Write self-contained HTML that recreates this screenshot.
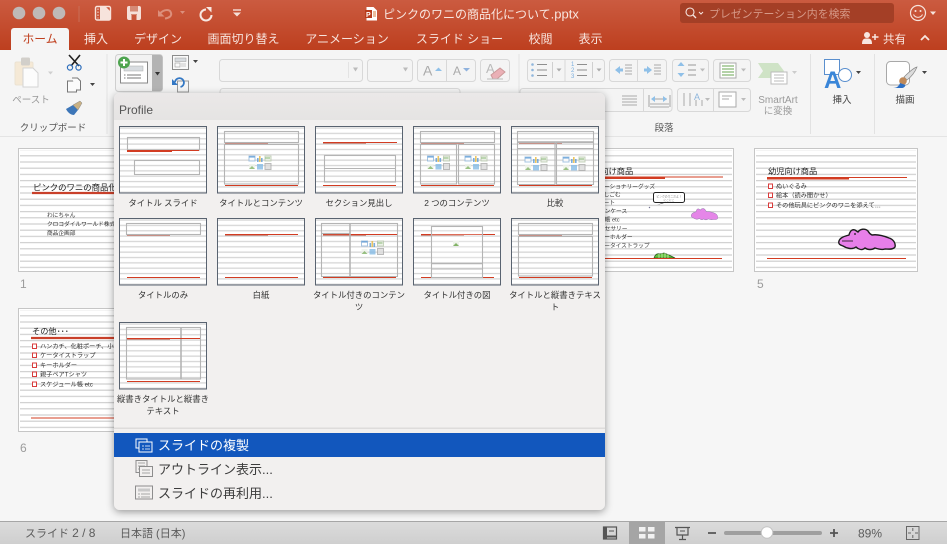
<!DOCTYPE html>
<html lang="ja"><head><meta charset="utf-8"><title>ピンクのワニの商品化について.pptx</title>
<style>
html,body{margin:0;padding:0;background:#f6f6f6;width:947px;height:544px;overflow:hidden}
svg{display:block}
text{font-family:"Liberation Sans","Noto Sans CJK JP",sans-serif}
.tab{font-size:12px;fill:#f7e3dc;text-anchor:middle}
.lb{font-size:8.4px;fill:#333;text-anchor:middle}
.rb{font-size:9.5px;fill:#999;text-anchor:middle}
.rd{font-size:9.5px;fill:#444;text-anchor:middle}
.m{font-size:13px;fill:#3c3c3c}
.st{font-size:11px;fill:#5c5c5c}
.t8{font-size:8.2px;fill:#222}
.t6{font-size:6.2px;fill:#333}
.t5{font-size:5.7px;fill:#333}
.n{font-size:12px;fill:#9c9c9c}
.bx{fill:none;stroke:#b4b4b4;stroke-width:1.1}
.rr{stroke:#d23c22;stroke-width:.9}
.rg{stroke:#c88f85;stroke-width:1}
.ic{fill:none;stroke:#8d8d8d;stroke-width:1}
.btn{fill:#f4f4f4;stroke:#d8d8d8;stroke-width:1}
</style></head><body>
<svg width="947" height="544" viewBox="0 0 947 544" xmlns="http://www.w3.org/2000/svg">
<defs>
<linearGradient id="tb" x1="0" y1="0" x2="0" y2="1"><stop offset="0" stop-color="#cb5b40"/><stop offset="1" stop-color="#bd3f1f"/></linearGradient>
<linearGradient id="sb" x1="0" y1="0" x2="0" y2="1"><stop offset="0" stop-color="#dcdcdc"/><stop offset="1" stop-color="#cfcfcf"/></linearGradient>
<linearGradient id="ph" x1="0" y1="0" x2="0" y2="1"><stop offset="0" stop-color="#ebe8e8"/><stop offset="1" stop-color="#e5e4e3"/></linearGradient>
<pattern id="s1" width="6.2" height="6.2" patternUnits="userSpaceOnUse"><rect width="6.2" height="1.2" y="1" fill="#cfcfcf"/></pattern>
<pattern id="s2" width="10" height="5.35" patternUnits="userSpaceOnUse"><rect width="10" height="1.3" y="1.4" fill="#d6d6d6"/></pattern>
<filter id="sh" x="-5%" y="-5%" width="110%" height="110%"><feDropShadow dx="0" dy="2" stdDeviation="4" flood-color="#000" flood-opacity=".38"/></filter>
<g id="cl" opacity=".8">
<rect x="-11" y="-8" width="6" height="5" fill="#fff" stroke="#8fb6dc"/><rect x="-11" y="-8" width="6" height="1.6" fill="#5c9bd5"/>
<rect x="-3" y="-6" width="1.6" height="4" fill="#5c9bd5"/><rect x="-1" y="-8" width="1.6" height="6" fill="#e8b93a"/><rect x="1" y="-6" width="1.6" height="4" fill="#5c9bd5"/>
<rect x="5" y="-8" width="6" height="5" fill="#e8efe3" stroke="#b9c9ad"/><path d="M5 -6h5" stroke="#70a85a"/>
<rect x="-11" y="0" width="6" height="5" fill="#eef3ea"/><path d="M-11 5l3-3 3 3z" fill="#82b366"/>
<rect x="-3" y="0" width="6" height="5.5" fill="#86bce6"/>
<rect x="5" y="-.5" width="6" height="6" fill="#dcdcdc" stroke="#aaa"/>
</g>
<path id="croc" d="M839 241C840 237 846 236 849 235 850 231 852 229 855 230L858 232C860 229 865 228 868 231 869 233 870 234 872 235 878 234 884 236 889 238 893 239 896 243 895 247 893 250 888 249 885 249 882 250 878 249 875 248 872 250 868 250 865 248 862 251 858 249 856 247 852 250 846 248 843 246 840 245 838 244 839 241Z"/>
<g id="tile"><rect x=".5" y=".5" width="87" height="66.5" fill="#fff"/><rect x="1" y="1" width="86" height="65.5" fill="url(#s2)"/><rect x=".5" y=".5" width="87" height="66.5" fill="none" stroke="#596370" stroke-width="1"/></g>
<g id="slide"><rect x=".5" y=".5" width="163" height="123" fill="#fff" stroke="#c6c6c6"/><rect x="2" y="2" width="160" height="120" fill="url(#s1)"/></g>
</defs>

<!-- base -->
<rect width="947" height="544" fill="#f6f6f6"/>
<rect width="947" height="50" fill="url(#tb)"/>
<rect y="50" width="947" height="86" fill="#f5f5f5"/>
<rect y="136" width="947" height="1" fill="#e4e4e4"/>

<!-- title bar -->
<circle cx="19" cy="13" r="6.3" fill="#bfb9b7"/><circle cx="39" cy="13" r="6.3" fill="#bfb9b7"/><circle cx="59" cy="13" r="6.3" fill="#bfb9b7"/>
<rect x="78.500" y="6" width="1" height="16" fill="#c96e57"/>
<rect x="95.500" y="6.500" width="15" height="13.500" rx="1.500" fill="none" stroke="#f7e3dc" stroke-width="1.400"/><path d="M100 7h6l4 4v9h-10z" fill="#f7e3dc"/><path d="M98 8.500v10" stroke="#f7e3dc" stroke-dasharray="1.500 1.500"/>
<rect x="127" y="6" width="14" height="14" rx="2" fill="#f5dfd8"/><rect x="130" y="6" width="8" height="5.500" fill="#d58a76"/><rect x="131.500" y="15" width="5" height="5" fill="#c9553a"/><rect x="131" y="14" width="6" height="1" fill="#d58a76"/>
<path d="M160 13.500C164 9 170 9 171 13 172 16 169 18 165 18.500" fill="none" stroke="#dc8f7c" stroke-width="2"/><path d="M158 10v6.500h6.500z" fill="#dc8f7c"/><path d="M180 11h5l-2.500 3z" fill="#dc8f7c"/>
<path d="M206 9.500A5.500 5.500 0 1 0 211.500 15" fill="none" stroke="#f7e8e2" stroke-width="2"/><path d="M206 7h5.500v5.500z" fill="#f7e8e2"/>
<path d="M233 10h8" stroke="#f5dfd8" stroke-width="1.400"/><path d="M233 12.500h8l-4 4z" fill="#f5dfd8"/>
<path d="M366.500 7h7l3.500 3.500v10h-10.500z" fill="#fff"/><rect x="365" y="10" width="7" height="8" fill="#b83c1c"/><text x="366" y="17" font-size="7" font-weight="bold" fill="#fff">P</text><path d="M373 12h3M373 14h3M373 16h3" stroke="#d77b3c"/>
<text x="383" y="18.500" font-size="12" fill="#f8e6e0">ピンクのワニの商品化について<tspan font-size="13">.pptx</tspan></text>
<rect x="680" y="3" width="214" height="20" rx="3" fill="#a43f26"/>
<circle cx="690" cy="12" r="4" fill="none" stroke="#f5e5e0" stroke-width="1.100"/><path d="M693 15l3 3" stroke="#f5e5e0" stroke-width="1.300"/><path d="M699 12l2 2 2-2" fill="none" stroke="#f5e5e0"/>
<text x="709" y="17.500" font-size="10.900" fill="#d69887">プレゼンテーション内を検索</text>
<circle cx="918" cy="13" r="7.500" fill="none" stroke="#f7e3dc" stroke-width="1.200"/><circle cx="915.500" cy="11" r="1" fill="#f7e3dc"/><circle cx="920.500" cy="11" r="1" fill="#f7e3dc"/><path d="M913.500 14.500a5 5 0 0 0 9 0" fill="none" stroke="#f7e3dc"/><path d="M930 11.500h6l-3 3.500z" fill="#f7e3dc"/>

<!-- tabs -->
<path d="M11 50V31a3 3 0 0 1 3-3h52a3 3 0 0 1 3 3v19z" fill="#f5f5f5"/>
<text x="40" y="43" text-anchor="middle" font-size="11.800" fill="#c0401f">ホーム</text>
<text class="tab" x="96" y="43">挿入</text>
<text class="tab" x="158" y="43">デザイン</text>
<text class="tab" x="243.500" y="43">画面切り替え</text>
<text class="tab" x="347" y="43">アニメーション</text>
<text class="tab" x="459.500" y="43">スライド ショー</text>
<text class="tab" x="540.500" y="43">校閲</text>
<text class="tab" x="590.500" y="43">表示</text>
<circle cx="867" cy="35" r="3" fill="#f8e6e0"/><path d="M862 44c0-5 2-5.500 5-5.500s5 .5 5 5.500z" fill="#f8e6e0"/><path d="M872 37h6.500M875 34v6" stroke="#f8e6e0" stroke-width="1.500"/>
<text x="883" y="43" font-size="11.500" fill="#f8e6e0">共有</text>
<path d="M921 40l4-4 4 4" fill="none" stroke="#f8e6e0" stroke-width="1.800"/>

<!-- ribbon separators -->
<g fill="#e2e2e2"><rect x="106.500" y="54" width="1" height="80"/><rect x="518.500" y="54" width="1" height="80"/><rect x="810" y="54" width="1" height="80"/><rect x="874" y="54" width="1" height="80"/></g>

<!-- clipboard -->
<rect x="15" y="62" width="18" height="23" rx="1.500" fill="#f5e9d6" stroke="#ebe2d2"/><rect x="21" y="57.500" width="9" height="8" rx="1.500" fill="#d2cfca"/>
<path d="M23 68h10l5 5v14H23z" fill="#fcfcfc" stroke="#d4d4d4"/><path d="M48 71.500h5l-2.500 3z" fill="#cfcfcf"/>
<text class="rb" x="31" y="103">ペースト</text>
<path d="M69 55l10 11M80 55L71 66" stroke="#222" stroke-width="1.600"/><circle cx="70" cy="67.500" r="2.600" fill="none" stroke="#2f6fbc" stroke-width="1.200"/><circle cx="78.500" cy="67.500" r="2.600" fill="none" stroke="#2f6fbc" stroke-width="1.200"/>
<rect x="67.500" y="81" width="9" height="11" fill="#fbfbfb" stroke="#777"/><path d="M72 78h5.500l3 3v9h-4" fill="#fbfbfb" stroke="#777"/><path d="M90 83h5l-2.500 3z" fill="#444"/>
<path d="M66 109l7-4 5 5-4 5c-3 0-6-2-8-6z" fill="#3d76b8"/><path d="M73 105l7-4 2 2-4 7z" fill="#c9b184" stroke="#888" stroke-width=".5"/>
<text x="53" y="131" text-anchor="middle" font-size="9.500" fill="#555">クリップボード</text>

<!-- new slide -->
<rect x="115.500" y="54.500" width="47" height="37" rx="3" fill="#f2f2f2" stroke="#cfcfcf"/>
<path d="M152 55h8a2.500 2.500 0 0 1 2.500 2.500v31a2.500 2.500 0 0 1-2.500 2.500h-8z" fill="#b3b3b3"/><path d="M155 72h5l-2.500 3.500z" fill="#333"/>
<rect x="120.500" y="62" width="27" height="21" fill="#fff" stroke="#888"/><rect x="124" y="66" width="19" height="5" fill="#d8dce0" stroke="#aaa" stroke-width=".5"/><path d="M124 75h1.500M127 75h14M124 78h1.500M127 78h14" stroke="#777"/>
<circle cx="124" cy="62.500" r="6" fill="#4ea44f"/><path d="M120.500 62.500h7M124 59v7" stroke="#fff" stroke-width="2"/>
<rect x="172.500" y="55.500" width="16" height="14" fill="#fafafa" stroke="#8c8c8c"/><rect x="175" y="58" width="11" height="3.500" fill="#d8dce0" stroke="#999" stroke-width=".5"/><rect x="175" y="63" width="5" height="4" fill="none" stroke="#999" stroke-width=".6"/><path d="M181 64h5M181 66h5" stroke="#999" stroke-width=".6"/>
<path d="M193 60h5l-2.500 3z" fill="#444"/>
<rect x="177.500" y="81" width="11" height="11" fill="#f5f5f5" stroke="#999"/><path d="M175 82a4.500 4.500 0 1 1 5.500 5" fill="none" stroke="#3478c4" stroke-width="1.800"/><path d="M172 79v6h6z" fill="#3478c4"/>

<!-- font group -->
<rect class="btn" x="219.500" y="59.500" width="143" height="22" rx="3"/><path d="M353 67.500h5l-2.500 4z" fill="#bbb"/><rect x="348" y="62" width="1" height="16" fill="#e3e3e3"/>
<rect class="btn" x="367.500" y="59.500" width="45" height="22" rx="3"/><path d="M403 67.500h5l-2.500 4z" fill="#bbb"/>
<rect class="btn" x="417.500" y="59.500" width="58" height="22" rx="3"/><rect x="446" y="60" width="1" height="21" fill="#d8d8d8"/>
<text x="423" y="75.500" font-size="14" fill="#aaa">A</text><path d="M435 71l3.500-3.500 3.500 3.500z" fill="#8fc0e8"/>
<text x="453" y="75" font-size="12" fill="#aaa">A</text><path d="M463 68h7l-3.500 3.500z" fill="#8fb2dd"/>
<rect class="btn" x="480.500" y="59.500" width="29" height="22" rx="3"/><text x="486" y="73" font-size="13" fill="#bbb">A</text><path d="M491 75l9-7 5 4-8 7h-4z" fill="#eab0b6" stroke="#c99"/><path d="M487 79h16" stroke="#bbb"/>
<rect class="btn" x="220" y="88.500" width="240" height="20" rx="3"/>

<!-- paragraph row 1 -->
<rect class="btn" x="527.500" y="59.500" width="77" height="22" rx="3"/><rect x="564.500" y="60" width="1" height="21" fill="#d8d8d8"/>
<g fill="#8fb6dc"><circle cx="532.500" cy="64.500" r="1.300"/><circle cx="532.500" cy="70" r="1.300"/><circle cx="532.500" cy="75.500" r="1.300"/></g>
<path d="M537 64.500h10M537 70h10M537 75.500h10M577 64.500h10M577 70h10M577 75.500h10" stroke="#8e8e8e"/><rect x="552" y="62" width="1" height="16" fill="#cfcfcf"/><rect x="592" y="62" width="1" height="16" fill="#cfcfcf"/>
<path d="M556.500 68.500h5l-2.500 3zM596.500 68.500h5l-2.500 3z" fill="#aaa"/>
<text x="571" y="78" font-size="6" fill="#7aaede">3</text><text x="571" y="72" font-size="6" fill="#7aaede">2</text><text x="571" y="66" font-size="6" fill="#7aaede">1</text>
<rect class="btn" x="609.500" y="59.500" width="57" height="22" rx="3"/><rect x="637" y="60" width="1" height="21" fill="#d8d8d8"/>
<path d="M615 70l5-4v2.500h3v3h-3v2.500z" fill="#8fc0e8"/><path d="M625 65h7M625 68h7M625 71h7M625 74h7" stroke="#aaa"/>
<path d="M652 70l-5-4v2.500h-3v3h3v2.500z" fill="#8fc0e8"/><path d="M654 65h7M654 68h7M654 71h7M654 74h7" stroke="#aaa"/>
<rect class="btn" x="672.500" y="59.500" width="36" height="22" rx="3"/><path d="M681 62l-3.500 4h7zM681 77l-3.500-4h7z" fill="#8fc0e8"/><path d="M688 65h8M688 70h8M688 75h8" stroke="#999"/><path d="M700 68.500h5l-2.500 3z" fill="#bbb"/>
<rect class="btn" x="713.500" y="59.500" width="37" height="22" rx="3"/><rect x="720" y="63" width="16" height="15" fill="#fff" stroke="#aaa"/><path d="M722 66h12M722 69h12M722 72h12M722 75h12" stroke="#9cc48c" stroke-width="1.500"/><path d="M741 68.500h5l-2.500 3z" fill="#bbb"/>
<path d="M758 63h20l6 8-6 7h-20l5-7z" fill="#cfe3c6"/><rect x="771" y="72" width="16" height="12" fill="#fff" stroke="#bbb"/><path d="M774 75h10M774 78h10M774 81h10" stroke="#bbb"/><path d="M792 71h5l-2.500 3z" fill="#ccc"/>
<text x="778" y="103" text-anchor="middle" font-size="10" fill="#9a9a9a">SmartArt</text>
<text x="778" y="114" text-anchor="middle" font-size="9.500" fill="#9a9a9a">に変換</text>

<!-- paragraph row 2 -->
<rect class="btn" x="520" y="88.500" width="152" height="23" rx="3"/>
<path d="M622 96h15M622 99h15M622 102h15M622 105h15" stroke="#aaa"/>
<rect x="643" y="89" width="1" height="22" fill="#d8d8d8"/>
<path d="M649 95v12M670 95v12M652 99h15" stroke="#a4a4a4"/><path d="M651 99l4-3v6zM667 99l-4-3v6z" fill="#8fc0e8"/><path d="M650 104h19M650 107h19" stroke="#aaa"/>
<rect class="btn" x="677.500" y="88.500" width="73" height="23" rx="3"/><rect x="713" y="89" width="1" height="22" fill="#d8d8d8"/>
<path d="M684 93v13M690 93v13M696 100v6M702 100v6" stroke="#aaa"/><text x="694" y="100" font-size="9" fill="#8fb6dc">A</text><path d="M705 98h5l-2.500 3z" fill="#bbb"/>
<rect x="719" y="92" width="17" height="15" fill="#fff" stroke="#aaa"/><path d="M722 96h10M722 99h7" stroke="#aaa"/><path d="M741 98h5l-2.500 3z" fill="#bbb"/>
<text x="664" y="131" text-anchor="middle" font-size="9.500" fill="#555">段落</text>

<!-- insert / draw -->
<rect x="824.500" y="59.500" width="15" height="15" fill="#fff" stroke="#5a8fce"/><circle cx="845" cy="75" r="6.500" fill="#fff" stroke="#5a8fce"/>
<text x="824" y="88" font-size="24" font-weight="bold" fill="#3a86d8">A</text>
<path d="M856 71h5l-2.500 3z" fill="#444"/>
<text class="rd" x="842" y="103">挿入</text>
<rect x="886.500" y="61.500" width="23" height="23.500" rx="4" fill="#fff" stroke="#a8a8a8"/>
<path d="M917 67c-4 1-9 6-13 10l3 3c4-3 8-8 10-13z" fill="#dcdcdc" stroke="#888" stroke-width=".7"/><circle cx="903" cy="81" r="3.800" fill="#c08a5a"/><path d="M893 88c4 0 6-2 7-5l5.500 2c-.5 2-2 3-4 3z" fill="#2d6fc4"/>
<path d="M922 71h5l-2.500 3z" fill="#444"/>
<text class="rd" x="905" y="103">描画</text>

<!-- slides -->
<use href="#slide" x="18" y="148"/>
<text x="33" y="190.500" class="t8" style="font-size:8.400px">ピンクのワニの商品化</text>
<path d="M32 193h100" stroke="#c9402a" stroke-width="2.200"/>
<text x="47" y="217" class="t6" style="font-size:5.700px">わにちゃん</text>
<text x="47" y="226" class="t6" style="font-size:5.700px">クロコダイルワールド株式会社</text>
<text x="47" y="235" class="t6" style="font-size:5.700px">商品企画部</text>
<text x="20" y="288" class="n">1</text>

<use href="#slide" x="570" y="148"/>
<text x="584" y="174" class="t8">子供向け商品</text>
<path d="M584 177h139" stroke="#d23c22"/><path d="M584 178h81" stroke="#d23c22" stroke-width="2"/>
<text x="592.600" y="188.500" class="t5">ステーショナリーグッズ</text>
<text x="598" y="196.500" class="t5">けしごむ</text>
<text x="598" y="204.500" class="t5">ノート</text>
<text x="599" y="213" class="t5">ペンケース</text>
<text x="599" y="221.500" class="t5">手帳 etc</text>
<text x="593.600" y="230.500" class="t5">アクセサリー</text>
<text x="598.500" y="239" class="t5">キーホルダー</text>
<text x="598.600" y="247.500" class="t5">ケータイストラップ</text>
<rect x="653.500" y="192.500" width="31" height="10" rx="2" fill="#fff" stroke="#222"/><path d="M664 203l-7 2 5-2z" fill="#222"/><path d="M650 207l-1 1" stroke="#668"/>
<text x="669" y="197.500" text-anchor="middle" font-size="2.800" fill="#777">ピンクのワニだよ！</text><text x="669" y="201" text-anchor="middle" font-size="2.800" fill="#777">にこにこ</text>
<use href="#croc" transform="translate(297 82.500) scale(.47 .55)" fill="#e586e8" stroke="#9a7fb0" stroke-width="1"/>
<path d="M654 258c1-3 3-5 6-4l4-1 5 2 6 3z" fill="#62c23c" stroke="#2a5a1e" stroke-width=".7"/><path d="M659 254v4M662 253v5M665 253v5M668 254v4" stroke="#d8f0c8" stroke-width=".7"/>
<path d="M585 258.500h137" stroke="#d23c22"/>

<use href="#slide" x="754" y="148"/>
<text x="768" y="174" class="t8">幼児向け商品</text>
<path d="M767 177.500h140" stroke="#d23c22"/><path d="M767 178.500h82" stroke="#d23c22" stroke-width="2"/>
<g fill="#fff" stroke="#d83c3c" stroke-width="1"><rect x="768.500" y="184" width="4" height="4.500"/><rect x="768.500" y="193" width="4" height="4.500"/><rect x="768.500" y="203" width="4" height="4.500"/></g>
<text x="776" y="188.500" class="t6">ぬいぐるみ</text>
<text x="776" y="197.500" class="t6">絵本（読み聞かせ）</text>
<text x="776" y="207.500" class="t6">その他玩具にピンクのワニを添えて…</text>
<use href="#croc" fill="#e77fe9" stroke="#1c1c1c" stroke-width="1.400"/>
<circle cx="855" cy="234" r=".9" fill="#111"/><path d="M842 241h11" stroke="#111" stroke-width=".8"/>
<path d="M767 258.500h139" stroke="#d23c22"/>
<text x="757" y="288" class="n">5</text>

<use href="#slide" x="18" y="308"/>
<text x="32" y="334" class="t8">その他･･･</text>
<path d="M31 338h100" stroke="#c9402a" stroke-width="2.200"/>
<g fill="#fff" stroke="#d83c3c" stroke-width="1"><rect x="32.500" y="344" width="4" height="4.500"/><rect x="32.500" y="353" width="4" height="4.500"/><rect x="32.500" y="363" width="4" height="4.500"/><rect x="32.500" y="372" width="4" height="4.500"/><rect x="32.500" y="382" width="4" height="4.500"/></g>
<text x="40" y="348.500" class="t6">ハンカチ、化粧ポーチ、小物</text>
<text x="40" y="357.500" class="t6">ケータイストラップ</text>
<text x="40" y="367.500" class="t6">キーホルダー</text>
<text x="40" y="376.500" class="t6">親子ペアTシャツ</text>
<text x="40" y="386.500" class="t6">スケジュール帳 etc</text>
<path d="M31 418h100" stroke="#d23c22"/>
<text x="20" y="452" class="n">6</text>

<!-- popup -->
<rect x="114" y="93" width="491" height="417" rx="6" fill="#f2f0ef" filter="url(#sh)"/>
<path d="M114 120V99a6 6 0 0 1 6-6h479a6 6 0 0 1 6 6v21z" fill="url(#ph)"/>
<text x="119" y="114" font-size="12" fill="#555">Profile</text>

<!-- tiles row 1 -->
<g transform="translate(119 126)"><use href="#tile"/><rect class="bx" x="8.500" y="11.500" width="72" height="12.500"/><path class="rr" d="M8 24.500h72"/><path d="M8 25.500h45" stroke="#d23c22"/><rect class="bx" x="15.500" y="34.500" width="65" height="14"/></g>
<g transform="translate(217 126)"><use href="#tile"/><rect class="bx" x="7.500" y="5.500" width="74" height="11"/><path class="rg" d="M8 17.500h43"/><rect class="bx" x="7.500" y="18.500" width="74" height="39.500"/><use href="#cl" x="43" y="38"/><path class="rr" d="M8 59.500h73"/></g>
<g transform="translate(315 126)"><use href="#tile"/><path class="rr" d="M8 16.500h74"/><path class="rg" d="M8 17.500h43"/><rect class="bx" x="9.500" y="29.500" width="71" height="26.500"/><path class="bx" d="M9.500 42.500h71"/><path class="rr" d="M8 59.500h73"/></g>
<g transform="translate(413 126)"><use href="#tile"/><rect class="bx" x="7.500" y="5.500" width="74" height="11"/><path class="rg" d="M8 17.500h43"/><rect class="bx" x="7.500" y="18.500" width="36" height="39.500"/><rect class="bx" x="45.500" y="18.500" width="36" height="39.500"/><use href="#cl" x="25.500" y="38"/><use href="#cl" x="63" y="38"/><path class="rr" d="M8 59.500h73"/></g>
<g transform="translate(511 126)"><use href="#tile"/><rect class="bx" x="6.500" y="5.500" width="76" height="10.500"/><path d="M6 16h77" stroke="#b4b4b4" stroke-width="1.500"/><path class="rg" d="M8 17.500h43"/><rect class="bx" x="6.500" y="16.500" width="37.500" height="42"/><rect class="bx" x="45.500" y="16.500" width="37" height="42"/><path class="bx" d="M6.500 22.500h76"/><use href="#cl" x="25" y="39"/><use href="#cl" x="63" y="39"/><path class="rr" d="M8 59.500h73"/></g>

<!-- tiles row 2 -->
<g transform="translate(119 218)"><use href="#tile"/><rect class="bx" x="7.500" y="5.500" width="74" height="11"/><path class="rg" d="M8 17.500h43"/><path class="rr" d="M8 59.500h73"/></g>
<g transform="translate(217 218)"><use href="#tile"/><path class="rr" d="M8 16.500h73"/><path class="rg" d="M8 17.500h43"/><path class="rr" d="M8 59.500h73"/></g>
<g transform="translate(315 218)"><use href="#tile"/><path class="rr" d="M8 16.500h74"/><path class="rg" d="M8 17.500h43"/><rect class="bx" x="6.500" y="5.500" width="76" height="53"/><path d="M35 5v54" stroke="#b4b4b4" stroke-width="1.600"/><path d="M6 15.500h29" stroke="#b4b4b4" stroke-width="1.300"/><use href="#cl" x="57.500" y="31"/><path class="rr" d="M8 59.500h73"/></g>
<g transform="translate(413 218)"><use href="#tile"/><path class="rr" d="M8 16.500h74"/><path class="rg" d="M8 17.500h43"/><path class="rr" d="M8 59.500h73"/><rect x="18.500" y="8.500" width="51" height="51" fill="#fff" fill-opacity=".25" stroke="#b4b4b4" stroke-width="1.100"/><path d="M18 45.500h52" stroke="#b4b4b4" stroke-width="1.600"/><path class="bx" d="M18 51h52"/><rect x="40" y="23" width="6" height="5" fill="#eef3ea"/><path d="M40 28l3-3 3 3z" fill="#82b366"/></g>
<g transform="translate(511 218)"><use href="#tile"/><rect class="bx" x="7.500" y="5.500" width="74" height="11"/><path class="rg" d="M8 17.500h43"/><rect class="bx" x="7.500" y="18.500" width="74" height="39.500"/><path class="rr" d="M8 59.500h73"/></g>

<!-- tile row 3 -->
<g transform="translate(119 322)"><use href="#tile"/><rect class="bx" x="7.500" y="5.500" width="74" height="51.500"/><path d="M62 5v52" stroke="#b4b4b4" stroke-width="1.600"/><path class="rr" d="M8 16.500h73"/><path class="rg" d="M8 17.500h43"/><path class="rr" d="M8 59.500h73"/></g>

<!-- labels -->
<text class="lb" x="163" y="206">タイトル スライド</text>
<text class="lb" x="261" y="206">タイトルとコンテンツ</text>
<text class="lb" x="359" y="206">セクション見出し</text>
<text class="lb" x="457" y="206">2 つのコンテンツ</text>
<text class="lb" x="555" y="206">比較</text>
<text class="lb" x="163" y="298">タイトルのみ</text>
<text class="lb" x="261" y="298">白紙</text>
<text class="lb" x="359" y="298">タイトル付きのコンテン</text>
<text class="lb" x="359" y="310">ツ</text>
<text class="lb" x="457" y="298">タイトル付きの図</text>
<text class="lb" x="555" y="298">タイトルと縦書きテキス</text>
<text class="lb" x="555" y="310">ト</text>
<text class="lb" x="163" y="402">縦書きタイトルと縦書き</text>
<text class="lb" x="163" y="414">テキスト</text>

<!-- menu -->
<rect x="114" y="427.500" width="491" height="1.500" fill="#dedcdb"/>
<rect x="114" y="433" width="491" height="24" fill="#1257bd"/>
<g fill="none" stroke="#fff"><rect x="136" y="439" width="11" height="9"/><rect x="139" y="442" width="13" height="10" fill="#1257bd"/><path d="M142 446h2M145 446h5M142 449h2M145 449h5" stroke-width=".8"/></g>
<text x="158" y="450" class="m" style="fill:#fff">スライドの複製</text>
<g class="ic"><rect x="136" y="460.500" width="11" height="12"/><path d="M138 463h7M138 466h7M138 469h3" stroke-width=".7"/><rect x="139.500" y="466.500" width="13" height="10" fill="#f2f0ef"/><path d="M142 470h8M142 473h8" stroke-width=".7"/></g>
<text x="158" y="474" class="m">アウトライン表示...</text>
<g class="ic"><rect x="135.500" y="486" width="17" height="13"/><rect x="138" y="488.500" width="12" height="3" fill="#c9c9c9" stroke="none"/><path d="M138 494h2M141 494h9M138 497h2M141 497h9" stroke-width=".7"/></g>
<text x="158" y="498" class="m">スライドの再利用...</text>

<!-- status bar -->
<rect y="521" width="947" height="23" fill="url(#sb)"/><rect y="521" width="947" height="1" fill="#a6a6a6"/>
<text x="25" y="537" class="st">スライド <tspan font-size="12">2 / 8</tspan></text>
<text x="120" y="537" class="st">日本語 (日本)</text>
<rect x="603.500" y="527" width="13" height="12" fill="none" stroke="#555" stroke-width="1.200"/><rect x="603" y="527" width="4" height="12" fill="#555"/><path d="M609 531h5" stroke="#555"/><path d="M607 536.500h9" stroke="#555" stroke-width="2"/>
<rect x="629" y="522" width="36" height="22" fill="#a5a5a5"/>
<g fill="#f2f2f2"><rect x="639" y="527" width="6.500" height="4.500"/><rect x="648" y="527" width="6.500" height="4.500"/><rect x="639" y="534" width="6.500" height="4.500"/><rect x="648" y="534" width="6.500" height="4.500"/></g>
<path d="M675 527.500h15M677 528v7h11v-7M682.500 535v4M679 539.500h7" fill="none" stroke="#555" stroke-width="1.200"/><path d="M680 531h5" stroke="#555"/>
<path d="M708 533h8M830 533h8M834 529v8" stroke="#555" stroke-width="1.800"/>
<rect x="724" y="531" width="98" height="4" rx="2" fill="#9f9f9f"/>
<circle cx="767" cy="532.500" r="5.800" fill="#fff" stroke="#c4c4c4"/>
<text x="858" y="537.500" font-size="12" fill="#5c5c5c">89%</text>
<rect x="906.500" y="526.500" width="12.500" height="13" fill="none" stroke="#666"/><path d="M912.800 528v3M912.800 535v3M908 533h3M915 533h3" stroke="#666"/>
</svg>
</body></html>
